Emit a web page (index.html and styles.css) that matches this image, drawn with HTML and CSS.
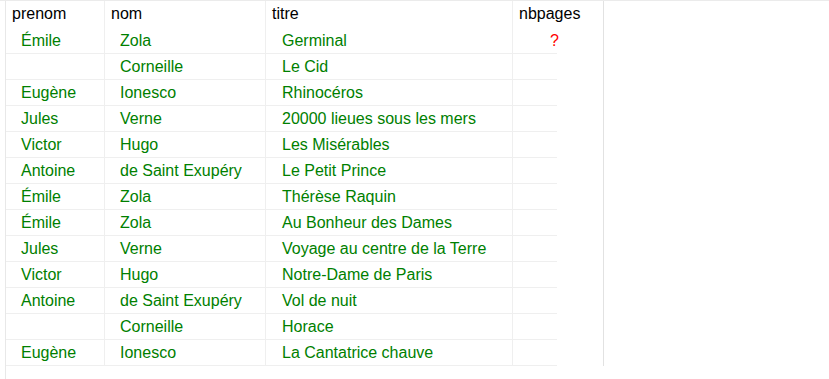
FILE: index.html
```html
<!DOCTYPE html>
<html lang="fr">
<head>
<meta charset="utf-8">
<title>Livres</title>
<link rel="stylesheet" href="styles.css">
</head>
<body>
<div class="frame">
  <div class="grid">
    <div class="hd">prenom</div><div class="hd">nom</div><div class="hd">titre</div><div class="hd last">nbpages</div>

    <div class="c">Émile</div><div class="c">Zola</div><div class="c">Germinal</div><div class="c last q">?</div>
    <div class="c"></div><div class="c">Corneille</div><div class="c">Le Cid</div><div class="c last"></div>
    <div class="c">Eugène</div><div class="c">Ionesco</div><div class="c">Rhinocéros</div><div class="c last"></div>
    <div class="c">Jules</div><div class="c">Verne</div><div class="c">20000 lieues sous les mers</div><div class="c last"></div>
    <div class="c">Victor</div><div class="c">Hugo</div><div class="c">Les Misérables</div><div class="c last"></div>
    <div class="c">Antoine</div><div class="c">de Saint Exupéry</div><div class="c">Le Petit Prince</div><div class="c last"></div>
    <div class="c">Émile</div><div class="c">Zola</div><div class="c">Thérèse Raquin</div><div class="c last"></div>
    <div class="c">Émile</div><div class="c">Zola</div><div class="c">Au Bonheur des Dames</div><div class="c last"></div>
    <div class="c">Jules</div><div class="c">Verne</div><div class="c">Voyage au centre de la Terre</div><div class="c last"></div>
    <div class="c">Victor</div><div class="c">Hugo</div><div class="c">Notre-Dame de Paris</div><div class="c last"></div>
    <div class="c">Antoine</div><div class="c">de Saint Exupéry</div><div class="c">Vol de nuit</div><div class="c last"></div>
    <div class="c"></div><div class="c">Corneille</div><div class="c">Horace</div><div class="c last"></div>
    <div class="c">Eugène</div><div class="c">Ionesco</div><div class="c">La Cantatrice chauve</div><div class="c last"></div>
  </div>
</div>
</body>
</html>
```
FILE: styles.css
```css
html, body {
  margin: 0;
  padding: 0;
  background: #ffffff;
}
body {
  height: 100vh;
  box-sizing: border-box;
  border-top: 1px solid #ebebeb;
  font-family: "Liberation Sans", Arial, sans-serif;
  font-size: 16px;
}
.frame {
  margin-left: 5px;
  height: 100%;
  border-left: 1px solid #e8e8e8;
}
.grid {
  display: grid;
  grid-template-columns: 99px 161px 247px 91px;
  width: 598px;
}
.hd {
  height: 27px;
  line-height: 26px;
  box-sizing: border-box;
  padding-left: 6px;
  color: #000;
  border-right: 1px solid #efefef;
  white-space: nowrap;
}
.c {
  height: 26px;
  line-height: 25px;
  box-sizing: border-box;
  padding-left: 15px;
  color: #008000;
  border-right: 1px solid #efefef;
  border-bottom: 1px solid #efefef;
  white-space: nowrap;
}
.grid > .c:nth-child(4n+3) {
  padding-left: 16px;
}
.last {
  border-right-color: #e2e2e2;
}
.c.last {
  border-bottom: none;
  background: linear-gradient(#efefef, #efefef) left bottom / 44px 1px no-repeat;
}
.q {
  color: #ff0000;
  padding-left: 37px;
}
```
